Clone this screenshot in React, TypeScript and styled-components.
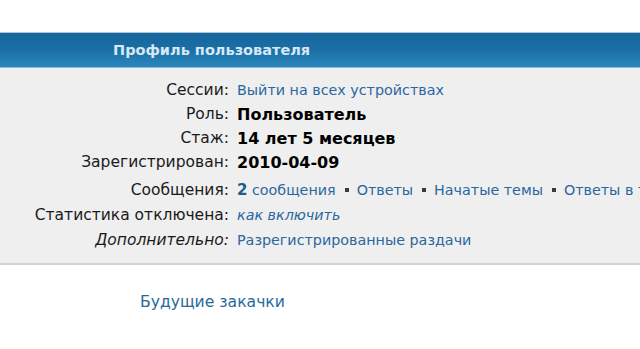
import styled, { createGlobalStyle } from 'styled-components';

const GlobalStyle = createGlobalStyle`
  html, body {
    margin: 0;
    padding: 0;
    background: #ffffff;
  }
  body {
    font-family: 'DejaVu Sans', Verdana, sans-serif;
    font-size: 14px;
    color: #1a1a1a;
  }
`;

const Page = styled.div`
  width: 640px;
  height: 349px;
  overflow: hidden;
  padding-top: 32px;
  box-sizing: border-box;
`;

const Panel = styled.section`
  border-bottom: 2px solid #d2d2d2;
  background: #efefef;
`;

const PanelHeader = styled.h2`
  margin: 0;
  height: 36px;
  box-sizing: border-box;
  padding-left: 113px;
  display: flex;
  align-items: center;
  font-size: 14.5px;
  font-weight: 700;
  color: #d6e8f6;
  background: linear-gradient(#16659b, #1b6fa6 50%, #2a87bd);
  border-top: 1px solid #a8c7dc;
  border-bottom: 1px solid #8fb9d6;
`;

const Rows = styled.div`
  padding: 10px 0 11px;
  display: flex;
  flex-direction: column;
`;

const Row = styled.div<{ $gap?: number }>`
  display: flex;
  align-items: center;
  height: ${(p) => 24 + (p.$gap ?? 0)}px;
  padding-top: ${(p) => p.$gap ?? 0}px;
  box-sizing: border-box;
  white-space: nowrap;
`;

const Label = styled.div<{ $italic?: boolean }>`
  width: 237px;
  flex: none;
  text-align: right;
  padding-right: 8px;
  box-sizing: border-box;
  font-size: 15.5px;
  color: #1a1a1a;
  font-style: ${(p) => (p.$italic ? 'italic' : 'normal')};
`;

const Value = styled.div<{ $bold?: boolean }>`
  font-size: ${(p) => (p.$bold ? 16 : 14.3)}px;
  font-weight: ${(p) => (p.$bold ? 700 : 400)};
  color: #000;
`;

const Link = styled.a<{ $italic?: boolean }>`
  color: #2a67a0;
  text-decoration: none;
  font-style: ${(p) => (p.$italic ? 'italic' : 'normal')};
`;

const Count = styled.b`
  color: #1d5c8c;
  font-size: 15px;
`;

const Sep = styled.span`
  display: inline-block;
  width: 4px;
  height: 4px;
  background: #3a3a3a;
  margin: 0 8px 0 9px;
  vertical-align: 3px;
`;

const Footer = styled.div`
  padding: 28px 0 0 140px;
  font-size: 15.6px;
`;

const FooterLink = styled.a`
  color: #276a9a;
  text-decoration: none;
`;

export default function App() {
  return (
    <>
      <GlobalStyle />
      <Page>
        <Panel>
          <PanelHeader>Профиль пользователя</PanelHeader>
          <Rows>
            <Row>
              <Label>Сессии:</Label>
              <Value>
                <Link href="#">Выйти на всех устройствах</Link>
              </Value>
            </Row>
            <Row>
              <Label>Роль:</Label>
              <Value $bold>Пользователь</Value>
            </Row>
            <Row>
              <Label>Стаж:</Label>
              <Value $bold>14 лет 5 месяцев</Value>
            </Row>
            <Row>
              <Label>Зарегистрирован:</Label>
              <Value $bold>2010-04-09</Value>
            </Row>
            <Row $gap={4}>
              <Label>Сообщения:</Label>
              <Value>
                <Link href="#">
                  <Count>2</Count> сообщения
                </Link>
                <Sep />
                <Link href="#">Ответы</Link>
                <Sep />
                <Link href="#">Начатые темы</Link>
                <Sep />
                <Link href="#">Ответы в темах</Link>
              </Value>
            </Row>
            <Row $gap={1}>
              <Label>Статистика отключена:</Label>
              <Value>
                <Link href="#" $italic>как включить</Link>
              </Value>
            </Row>
            <Row $gap={1}>
              <Label $italic>Дополнительно:</Label>
              <Value>
                <Link href="#">Разрегистрированные раздачи</Link>
              </Value>
            </Row>
          </Rows>
        </Panel>
        <Footer>
          <FooterLink href="#">Будущие закачки</FooterLink>
        </Footer>
      </Page>
    </>
  );
}
